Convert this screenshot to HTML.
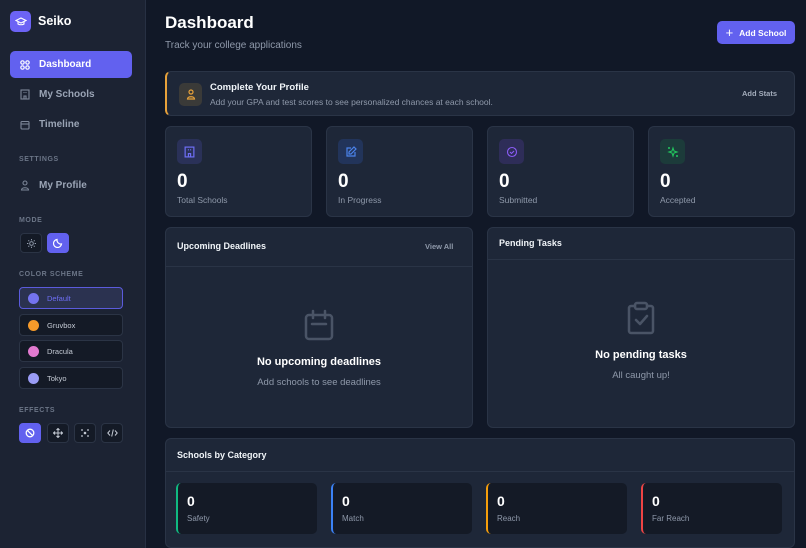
<!DOCTYPE html><html><head><style>
*{box-sizing:border-box;margin:0;padding:0}
body{width:806px;height:548px;overflow:hidden;background:#111827;font-family:"Liberation Sans",sans-serif;color:#f1f5f9;position:relative}
.sb{position:absolute;left:0;top:0;width:146px;height:548px;background:#1c2333;border-right:1px solid #273043}
.abs{position:absolute}
.logo{left:10px;top:11px;width:21px;height:21px;border-radius:5px;background:#6c63f5;display:flex;align-items:center;justify-content:center}
.nav{left:10px;width:122px;height:27px;border-radius:5px;display:flex;align-items:center;padding-left:10px;font-size:10px;font-weight:bold;color:#9aa4b5}
.nav svg{margin-right:9px}
.lbl{left:19px;font-size:7px;font-weight:bold;color:#6b7587;letter-spacing:.6px}
.sq{width:22px;height:20px;border-radius:4px;border:1px solid #2b3445;background:#141a26;display:flex;align-items:center;justify-content:center}
.cs{left:19px;width:104px;height:22px;border-radius:4px;border:1px solid #2b3445;background:#141a26;display:flex;align-items:center;padding-left:8px;font-size:7.5px;color:#c4cad4}
.cs i{width:11px;height:11px;border-radius:50%;margin-right:8px;display:inline-block}
.card{background:#1e2738;border:1px solid #2a3446;border-radius:6px}
.stat .ic{position:absolute;left:11px;top:12px;width:25px;height:25px;border-radius:5px;display:flex;align-items:center;justify-content:center}
.stat .n{position:absolute;left:11px;top:44px;font-size:19px;font-weight:bold;color:#fff}
.stat .t{position:absolute;left:11px;top:68px;font-size:8.5px;color:#8f99aa}
.ct{font-size:9px;font-weight:bold;color:#f1f5f9}
.cat{top:483px;width:141px;height:51px;background:#141a26;border-radius:5px;border-left:2px solid}
.cat b{position:absolute;left:9px;top:10px;font-size:14px;color:#fff}
.cat span{position:absolute;left:9px;top:31px;font-size:8px;color:#8f99aa}
</style></head><body>
<div class="sb">
<div class="abs logo"><svg width="12" height="12" viewBox="0 0 24 24" fill="none" stroke="#fff" stroke-width="2.2"><path d="M2 9l10-5 10 5-10 5z"/><path d="M6 11v5c3 2 9 2 12 0v-5"/></svg></div>
<div class="abs" style="left:38px;top:14px;font-size:12.5px;font-weight:bold;color:#fff">Seiko</div>
<div class="abs nav" style="top:51px;background:#6261ef;color:#fff"><svg width="10" height="10" viewBox="0 0 10 10" fill="none" stroke="#fff" stroke-width="1.2"><circle cx="2.5" cy="2.5" r="1.7"/><circle cx="7.5" cy="2.5" r="1.7"/><circle cx="2.5" cy="7.5" r="1.7"/><circle cx="7.5" cy="7.5" r="1.7"/></svg>Dashboard</div>
<div class="abs nav" style="top:81px"><svg width="10" height="11" viewBox="0 0 10 11" fill="none" stroke="#7d8799" stroke-width="1.1"><rect x="1" y="1" width="8" height="9"/><path d="M4 10V7h2v3M3.5 3.5h1M5.5 3.5h1"/></svg>My Schools</div>
<div class="abs nav" style="top:111px"><svg width="10" height="10" viewBox="0 0 10 10" fill="none" stroke="#7d8799" stroke-width="1.1"><rect x="1" y="1.5" width="8" height="7.5" rx="1"/><path d="M1 4h8"/></svg>Timeline</div>
<div class="abs lbl" style="top:156px">SETTINGS</div>
<div class="abs nav" style="top:172px"><svg width="10" height="11" viewBox="0 0 10 11" fill="none" stroke="#7d8799" stroke-width="1.1"><circle cx="5" cy="3" r="2"/><path d="M1.5 10c0-3 7-3 7 0z"/></svg>My Profile</div>
<div class="abs lbl" style="top:217px">MODE</div>
<div class="abs sq" style="left:20px;top:233px"><svg width="9" height="9" viewBox="0 0 10 10" fill="none" stroke="#9aa4b5" stroke-width="1"><circle cx="5" cy="5" r="2"/><path d="M5 0v1.5M5 8.5V10M0 5h1.5M8.5 5H10M1.5 1.5l1 1M7.5 7.5l1 1M1.5 8.5l1-1M7.5 2.5l1-1"/></svg></div>
<div class="abs sq" style="left:47px;top:233px;background:#6261ef;border-color:#6261ef"><svg width="10" height="10" viewBox="0 0 10 10" fill="none" stroke="#fff" stroke-width="1.2"><path d="M8.5 6A4 4 0 0 1 4 1.5 4 4 0 1 0 8.5 6z"/></svg></div>
<div class="abs lbl" style="top:271px">COLOR SCHEME</div>
<div class="abs cs" style="top:287px;background:#2b3250;border-color:#5b5bdc;color:#6e6ef5"><i style="background:#7473f0"></i>Default</div>
<div class="abs cs" style="top:314px"><i style="background:#f59a2a"></i>Gruvbox</div>
<div class="abs cs" style="top:340px"><i style="background:#e27ad0"></i>Dracula</div>
<div class="abs cs" style="top:367px"><i style="background:#9a9cf5"></i>Tokyo</div>
<div class="abs lbl" style="top:407px">EFFECTS</div>
<div class="abs sq" style="left:19px;top:423px;background:#6261ef;border-color:#6261ef"><svg width="10" height="10" viewBox="0 0 10 10" fill="none" stroke="#fff" stroke-width="1.3"><circle cx="5" cy="5" r="3.8"/><path d="M2.3 2.3l5.4 5.4"/></svg></div>
<div class="abs sq" style="left:47px;top:423px"><svg width="10" height="10" viewBox="0 0 10 10" fill="none" stroke="#c4cad4" stroke-width="1"><path d="M5 0.5v9M0.5 5h9M3.5 2L5 .5 6.5 2M3.5 8L5 9.5 6.5 8M2 3.5L.5 5 2 6.5M8 3.5L9.5 5 8 6.5"/></svg></div>
<div class="abs sq" style="left:74px;top:423px"><svg width="10" height="10" viewBox="0 0 10 10" fill="#c4cad4"><circle cx="5" cy="5" r="1.3"/><circle cx="2" cy="2" r=".9"/><circle cx="8" cy="2" r=".9"/><circle cx="2" cy="8" r=".9"/><circle cx="8" cy="8" r=".9"/></svg></div>
<div class="abs sq" style="left:101px;top:423px"><svg width="11" height="10" viewBox="0 0 11 10" fill="none" stroke="#c4cad4" stroke-width="1"><path d="M3 2.5L.8 5 3 7.5M8 2.5L10.2 5 8 7.5M6.3 1.5L4.7 8.5"/></svg></div>
</div>

<div class="abs" style="left:165px;top:13px;font-size:17px;font-weight:bold;color:#fff">Dashboard</div>
<div class="abs" style="left:165px;top:40px;font-size:10px;color:#8f99aa">Track your college applications</div>
<div class="abs" style="left:717px;top:21px;width:78px;height:23px;border-radius:5px;background:#6261ef;display:flex;align-items:center;justify-content:center;font-size:8.5px;font-weight:bold;color:#fff"><span style="font-size:13px;font-weight:normal;margin-right:6px">+</span>Add School</div>

<div class="abs card" style="left:165px;top:71px;width:630px;height:45px;border-left:2px solid #e8a23a">
<div class="abs" style="left:12px;top:11px;width:23px;height:23px;border-radius:5px;background:#3a3a38;display:flex;align-items:center;justify-content:center"><svg width="10" height="11" viewBox="0 0 10 11" fill="none" stroke="#e8a23a" stroke-width="1.2"><circle cx="5" cy="3" r="2"/><path d="M1.5 10c0-3 7-3 7 0z"/></svg></div>
<div class="abs ct" style="left:43px;top:10px;font-size:9.5px">Complete Your Profile</div>
<div class="abs" style="left:43px;top:25px;font-size:8.5px;color:#8f99aa">Add your GPA and test scores to see personalized chances at each school.</div>
<div class="abs" style="left:575px;top:17px;font-size:7.5px;font-weight:bold;color:#a3acbb">Add Stats</div>
</div>

<div class="abs card stat" style="left:165px;top:126px;width:147px;height:91px"><div class="ic" style="background:#2a3158"><svg width="11" height="12" viewBox="0 0 10 11" fill="none" stroke="#6e6ef5" stroke-width="1.1"><rect x="1" y="1" width="8" height="9"/><path d="M4 10V7h2v3M3.5 3.5h1M5.5 3.5h1"/></svg></div><div class="n">0</div><div class="t">Total Schools</div></div>
<div class="abs card stat" style="left:326px;top:126px;width:147px;height:91px"><div class="ic" style="background:#22345a"><svg width="12" height="12" viewBox="0 0 12 12" fill="none" stroke="#4b83ec" stroke-width="1.2"><path d="M6 2H2v8h8V6"/><path d="M9 1l2 2-5 5H4V6z"/></svg></div><div class="n">0</div><div class="t">In Progress</div></div>
<div class="abs card stat" style="left:487px;top:126px;width:147px;height:91px"><div class="ic" style="background:#2e2d58"><svg width="12" height="12" viewBox="0 0 12 12" fill="none" stroke="#8b5cf6" stroke-width="1.1"><circle cx="6" cy="6" r="4.5"/><path d="M4 6l1.5 1.5L8 5"/></svg></div><div class="n">0</div><div class="t">Submitted</div></div>
<div class="abs card stat" style="left:648px;top:126px;width:147px;height:91px"><div class="ic" style="background:#1c3b3a"><svg width="12" height="12" viewBox="0 0 12 12" fill="none" stroke="#22c55e" stroke-width="1.1"><path d="M6 2l1 3 3 1-3 1-1 3-1-3-3-1 3-1z"/><path d="M2 1v2M1 2h2M10 9v2M9 10h2"/></svg></div><div class="n">0</div><div class="t">Accepted</div></div>

<div class="abs card" style="left:165px;top:227px;width:308px;height:201px">
<div class="abs ct" style="left:11px;top:13px">Upcoming Deadlines</div>
<div class="abs" style="left:259px;top:14px;font-size:7.5px;font-weight:bold;color:#8f99aa">View All</div>
<div class="abs" style="left:0;top:38px;width:100%;border-top:1px solid #2a3446"></div>
<svg class="abs" style="left:137px;top:81px" width="32" height="32" viewBox="0 0 32 32" fill="none" stroke="#4a5466" stroke-width="2.5" stroke-linecap="round"><rect x="3" y="6" width="26" height="24" rx="3"/><path d="M10 2v7M22 2v7M9 15h14"/></svg>
<div class="abs" style="left:0;width:100%;top:128px;text-align:center;font-size:11px;font-weight:bold;color:#fff">No upcoming deadlines</div>
<div class="abs" style="left:0;width:100%;top:149px;text-align:center;font-size:9.5px;color:#8f99aa">Add schools to see deadlines</div>
</div>
<div class="abs card" style="left:487px;top:227px;width:308px;height:201px">
<div class="abs ct" style="left:11px;top:10px">Pending Tasks</div>
<div class="abs" style="left:0;top:31px;width:100%;border-top:1px solid #2a3446"></div>
<svg class="abs" style="left:138px;top:73px" width="30" height="34" viewBox="0 0 30 34" fill="none" stroke="#4a5466" stroke-width="2.5" stroke-linecap="round" stroke-linejoin="round"><path d="M9 5H5a2 2 0 0 0-2 2v23a2 2 0 0 0 2 2h20a2 2 0 0 0 2-2V7a2 2 0 0 0-2-2h-4"/><rect x="9" y="2" width="12" height="6" rx="2"/><path d="M10 19l4 4 7-8"/></svg>
<div class="abs" style="left:0;width:100%;top:121px;text-align:center;font-size:11px;font-weight:bold;color:#fff">No pending tasks</div>
<div class="abs" style="left:0;width:100%;top:142px;text-align:center;font-size:9.5px;color:#8f99aa">All caught up!</div>
</div>

<div class="abs card" style="left:165px;top:438px;width:630px;height:110px">
<div class="abs ct" style="left:11px;top:11px">Schools by Category</div>
<div class="abs" style="left:0;top:32px;width:100%;border-top:1px solid #2a3446"></div>
</div>
<div class="abs cat" style="left:176px;border-color:#10b981"><b>0</b><span>Safety</span></div>
<div class="abs cat" style="left:331px;border-color:#3b82f6"><b>0</b><span>Match</span></div>
<div class="abs cat" style="left:486px;border-color:#f59e0b"><b>0</b><span>Reach</span></div>
<div class="abs cat" style="left:641px;border-color:#ef4444"><b>0</b><span>Far Reach</span></div>
</body></html>
